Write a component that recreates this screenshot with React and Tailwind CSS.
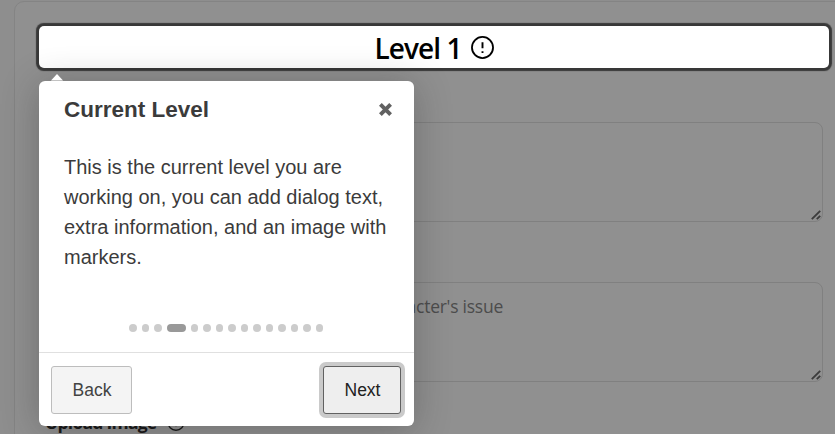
const dots = Array.from({ length: 15 }, (_, i) => i);

function InfoIcon({ className }) {
  return (
    <svg viewBox="0 0 24 24" fill="none" stroke="currentColor" className={className}>
      <circle cx="12" cy="12" r="11" strokeWidth="1.9" />
      <path d="M12 6.6v6.2M12 15.8v2" strokeWidth="2" />
    </svg>
  );
}

function Grip() {
  return (
    <svg viewBox="0 0 10 10" className="h-[10px] w-[10px]" stroke="#3c3c3c" strokeWidth="1.9" fill="none">
      <path d="M0.8 9.2L9.2 0.8M5.8 9.2L9.2 5.8" />
    </svg>
  );
}

function Field({ text }) {
  return (
    <div className="flex h-[100px] items-end justify-between rounded-[8px] border border-[#808080] pr-[1px] pb-[1px] pl-[10px]">
      <span className="w-[446px] self-start pt-[9px] text-right text-[17.5px] leading-[28px] tracking-[-0.25px] whitespace-pre text-[#4c4c4c]">{text}</span>
      <Grip />
    </div>
  );
}

function Tour() {
  return (
    <div className="absolute top-[81px] left-[39px] flex h-[345px] w-[375px] flex-col rounded-[6px] bg-white font-['Liberation_Sans',Arial,sans-serif] text-[#3b3b3b] shadow-[0_4px_37px_rgba(33,33,33,0.3)]">
      <svg viewBox="0 0 12 7" className="absolute -top-[7px] left-[12px] h-[7px] w-[12px]">
        <path d="M6 0L12 6.4H0Z" fill="white" />
      </svg>
      <div className="flex h-[56px] items-center justify-between pr-[22px] pl-[25px]">
        <h1 className="pt-[2px] text-[22.5px] leading-[36px] font-bold">Current Level</h1>
        <svg viewBox="0 0 14 14" className="h-[13px] w-[13px]" stroke="#616161" strokeWidth="4.2" strokeLinecap="butt" fill="none">
          <path d="M1.5 1.5L12.5 12.5M12.5 1.5L1.5 12.5" />
        </svg>
      </div>
      <p className="px-[25px] pt-[15px] text-[20px] leading-[30px]">
        This is the current level you are<br />working on, you can add dialog text,<br />extra information, and an image with<br />markers.
      </p>
      <div className="mt-[52px] flex justify-center gap-[5px] pr-[0.5px]">
        {dots.map((i) => (
          <span key={i} className={i === 3 ? "h-[8px] w-[18.75px] rounded-full bg-[#999]" : "h-[8px] w-[7.5px] rounded-full bg-[#ccc]"} />
        ))}
      </div>
      <div className="mt-auto flex h-[74px] items-center justify-between border-t border-[#e0e0e0] pr-[13px] pl-[12px] text-[17.5px] [text-shadow:1px_1px_0_#fff]">
        <button className="h-[48px] w-[81px] rounded-[3px] border border-[#bdbdbd] bg-[#f4f4f4] pt-[1px] pl-[1px] text-[#424242]">Back</button>
        <button className="h-[48px] w-[78px] rounded-[3px] border border-[#616161] bg-[#eee] pt-[1px] pl-[1px] text-[#212121] shadow-[0_0_0_4px_#cacaca]">Next</button>
      </div>
    </div>
  );
}

export default function App() {
  return (
    <div className="relative h-[434px] w-[835px] overflow-hidden bg-[#8e8e8e] pt-[1px] pl-[14px] font-['Open_Sans','Noto_Sans',sans-serif]">
      <div className="h-[500px] w-[860px] rounded-tl-[10px] border border-[#848484] bg-[#909090] pt-[24px] pl-[24px]">
        <div className="flex h-[42px] w-[790px] items-center justify-center gap-[9px] rounded-[5px] bg-white text-black shadow-[0_0_1px_2.5px_#383838]">
          <h2 className="pt-[2px] text-[28px] leading-[40px] font-semibold tracking-[-0.9px]">Level 1</h2>
          <InfoIcon className="mt-[1px] h-[23px] w-[23px]" />
        </div>
        <div className="flex w-[784px] flex-col pt-[54px] pl-[7px]">
          <Field text="" />
          <div className="mt-[60px]">
            <Field text="Enter a description of the character's issue" />
          </div>
          <div className="-ml-[1px] mt-[26px] flex items-center gap-[11px] text-[#161616]">
            <span className="text-[17.5px] leading-[28px] font-bold tracking-[-0.75px]">Upload Image</span>
            <InfoIcon className="h-[18px] w-[18px]" />
          </div>
        </div>
      </div>
      <Tour />
    </div>
  );
}
